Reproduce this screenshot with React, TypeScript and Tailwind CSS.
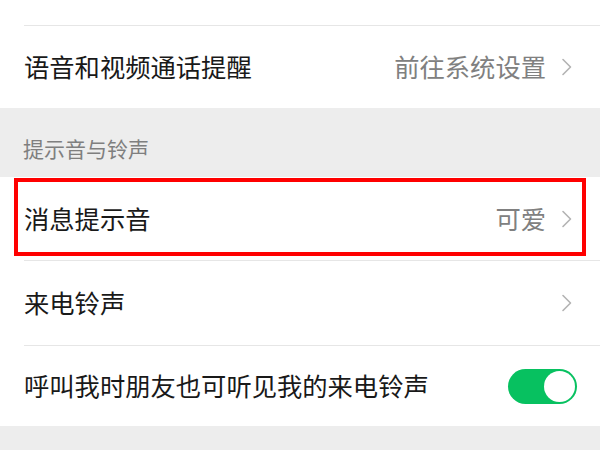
const Chevron = () => (
  <svg width="12" height="18" viewBox="0 0 12 18" fill="none" className="shrink-0">
    <path d="M2 1.5 L9.5 9 L2 16.5" stroke="#b3b3b3" strokeWidth="1.6" strokeLinecap="round" strokeLinejoin="round" />
  </svg>
);

const Toggle = () => (
  <div className="w-[69px] h-[35px] rounded-full bg-[#07c160] flex items-center justify-end p-[2px]">
    <div className="w-[31px] h-[31px] rounded-full bg-white" />
  </div>
);

export default function App() {
  const font = { fontFamily: '"Noto Sans CJK SC", "Noto Sans", sans-serif' };
  return (
    <div className="w-[600px] h-[450px] bg-[#ededed] overflow-hidden" style={font}>
      {/* top tail of previous row */}
      <div className="bg-white h-[25px]" />
      <div className="bg-white pl-6">
        <div className="border-t border-[#e6e6e6] h-[83px] flex items-center pr-[27px]">
          <span className="flex-1 text-[25.3px] text-[#191919]">语音和视频通话提醒</span>
          <span className="text-[25.3px] text-[#808080] mr-[15px]">前往系统设置</span>
          <Chevron />
        </div>
      </div>

      <div className="h-[69px] flex items-end pl-[23px] pb-[13px]">
        <span className="text-[21px] text-[#7f7f7f]">提示音与铃声</span>
      </div>

      <div className="bg-white">
        <div className="relative h-[83px] flex items-center pl-6 pr-[27px]">
          <span className="flex-1 text-[25.3px] text-[#191919]">消息提示音</span>
          <span className="text-[25.3px] text-[#808080] mr-[15px]">可爱</span>
          <Chevron />
          <div className="absolute left-[14px] top-px w-[572px] h-[78px] border-4 border-[#ff0000] pointer-events-none" />
        </div>
        <div className="pl-6">
          <div className="border-t border-[#e6e6e6] h-[85px] flex items-center pr-[27px]">
            <span className="flex-1 text-[25.3px] text-[#191919]">来电铃声</span>
            <Chevron />
          </div>
          <div className="border-t border-[#e6e6e6] h-[81px] flex items-center pr-[23px]">
            <span className="flex-1 text-[25.3px] text-[#191919]">呼叫我时朋友也可听见我的来电铃声</span>
            <Toggle />
          </div>
        </div>
      </div>
    </div>
  );
}
